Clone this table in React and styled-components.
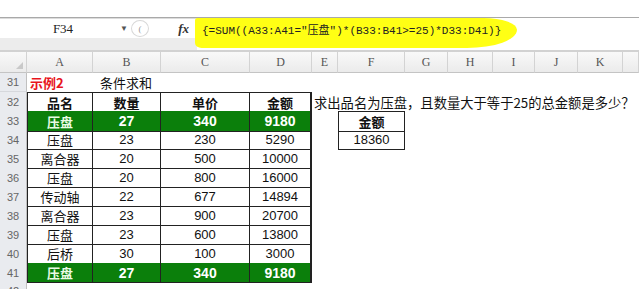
import React from "react";
import styled, { createGlobalStyle } from "styled-components";

const Global = createGlobalStyle`
  html, body { margin: 0; padding: 0; background: #fff; overflow: hidden; }
`;

const COLS = "27px 66px 68px 89px 62px 26px 67px 43px 45px 42px 43px 45px 1fr";
const CJK = `"Noto Sans CJK SC", "Liberation Sans", sans-serif`;
const NUM = `"Liberation Sans", "Noto Sans CJK SC", sans-serif`;

const Page = styled.div`
  width: 639px;
  height: 289px;
  overflow: hidden;
  background: #fff;
`;

const TopGap = styled.div`
  height: 17px;
  background: #fff;
`;

const FormulaBar = styled.div`
  display: flex;
  height: 35px;
  box-sizing: border-box;
  border-top: 1px solid #a9a9a9;
  box-shadow: inset 0 1px 0 #dcdcdc;
  border-bottom: 2px solid #d2d2d2;
  background: #ececec;
`;

const Tools = styled.div`
  width: 197px;
  display: flex;
  flex-direction: column;
`;

const ToolStrip = styled.div`
  height: 19px;
  margin-top: 1px;
  display: flex;
  align-items: center;
  background: #fff;
`;

const NameBox = styled.div`
  width: 130px;
  height: 100%;
  display: flex;
  align-items: center;
  font-family: "Liberation Serif", serif;
  font-size: 13px;
  color: #222;
  span { flex: 1; text-align: center; padding-left: 6px; }
  i {
    font-style: normal;
    font-size: 8px;
    color: #555;
    width: 10px;
  }
`;

const Handle = styled.div`
  width: 16px;
  height: 15px;
  border: 1px solid #d8d8d8;
  border-radius: 50%;
  margin-left: 1px;
  font-family: "Liberation Serif", serif;
  font-size: 9px;
  color: #999;
  display: flex;
  align-items: center;
  justify-content: center;
`;

const Fx = styled.div`
  margin-left: auto;
  margin-right: 8px;
  font-family: "Liberation Serif", serif;
  font-style: italic;
  font-weight: bold;
  font-size: 13px;
  color: #333;
`;

const FormulaInput = styled.div`
  flex: 1;
  position: relative;
  background: #fff;
`;

const Highlight = styled.div`
  position: absolute;
  left: -2px;
  top: 0;
  width: 322px;
  height: 30px;
  background: #ffff14;
  border-radius: 3px 40px 60px 8px / 3px 14px 22px 6px;
`;

const FormulaText = styled.div`
  position: relative;
  padding: 4px 0 0 5px;
  line-height: 19px;
  font-family: "Liberation Mono", "Noto Sans CJK SC", monospace;
  font-size: 11px;
  color: #222;
  white-space: nowrap;
`;

const Row = styled.div`
  display: grid;
  grid-template-columns: ${COLS};
  height: ${(p) => (p.$head ? 21 : 19)}px;
`;

const ColHead = styled.div`
  box-sizing: border-box;
  background: linear-gradient(#f9f9f9, #ebebeb);
  border-right: 1px solid #d3d3d3;
  border-bottom: 1px solid #c4c4c4;
  display: flex;
  align-items: center;
  justify-content: center;
  font-family: "Liberation Serif", serif;
  font-size: 12px;
  color: #555;
`;

const Corner = styled(ColHead)`
  position: relative;
  &::after {
    content: "";
    position: absolute;
    right: 3px;
    bottom: 3px;
    border-left: 7px solid transparent;
    border-bottom: 7px solid #c9c9c9;
  }
`;

const RowHead = styled.div`
  box-sizing: border-box;
  background: #e9ebef;
  border-right: 1px solid #c0c0c0;
  border-bottom: 1px solid #d6d8dc;
  display: flex;
  align-items: center;
  justify-content: center;
  font-family: "Liberation Sans", sans-serif;
  font-size: 11px;
  color: #666;
`;

const Cell = styled.div`
  box-sizing: border-box;
  display: flex;
  align-items: center;
  justify-content: ${(p) => (p.$align === "left" ? "flex-start" : "center")};
  padding-left: ${(p) => p.$pad || 0}px;
  white-space: nowrap;
  font-family: ${(p) => (p.$num ? NUM : CJK)};
  font-size: ${(p) => (p.$num && p.$bold ? 14 : 13)}px;
  font-weight: ${(p) => (p.$bold ? 700 : 400)};
  color: ${(p) => p.$color || "#111"};
  background: ${(p) => (p.$green ? "#0b7f0b" : "transparent")};
  border-right: ${(p) => (p.$boxed ? (p.$thick ? "2px solid #222" : "1px solid #222") : "none")};
  border-bottom: ${(p) => (p.$boxed ? "1px solid #222" : "none")};
  border-top: ${(p) => (p.$top ? "1px solid #222" : "none")};
  border-left: ${(p) => (p.$first ? "1px solid #222" : "none")};
`;

const Question = styled.span`
  font-family: ${CJK};
  font-size: 13.3px;
  color: #111;
  margin-left: 2px;
`;

const letters = ["A", "B", "C", "D", "E", "F", "G", "H", "I", "J", "K", ""];

const data = [
  ["压盘", 27, 340, 9180, true],
  ["压盘", 23, 230, 5290],
  ["离合器", 20, 500, 10000],
  ["压盘", 20, 800, 16000],
  ["传动轴", 22, 677, 14894],
  ["离合器", 23, 900, 20700],
  ["压盘", 23, 600, 13800],
  ["后桥", 30, 100, 3000],
  ["压盘", 27, 340, 9180, true],
];

const Blank = ({ n }) =>
  Array.from({ length: n }, (_, i) => <Cell key={"b" + i} />);

const App = () => {
  return (
    <Page>
      <Global />
      <TopGap />
      <FormulaBar>
        <Tools>
          <ToolStrip>
            <NameBox>
              <span>F34</span>
              <i>▼</i>
            </NameBox>
            <Handle>(</Handle>
            <Fx>fx</Fx>
          </ToolStrip>
        </Tools>
        <FormulaInput>
          <Highlight />
          <FormulaText>{'{=SUM((A33:A41="压盘")*(B33:B41>=25)*D33:D41)}'}</FormulaText>
        </FormulaInput>
      </FormulaBar>

      <Row $head>
        <Corner />
        {letters.map((l, i) => (
          <ColHead key={i}>{l}</ColHead>
        ))}
      </Row>

      <Row>
        <RowHead>31</RowHead>
        <Cell $align="left" $pad={3} $bold $color="#e8141c">示例2</Cell>
        <Cell $align="left" $pad={7}>条件求和</Cell>
        <Blank n={10} />
      </Row>

      <Row>
        <RowHead>32</RowHead>
        {["品名", "数量", "单价", "金额"].map((h, i) => (
          <Cell key={h} $boxed $top $first={i === 0} $thick={i === 3} $bold>
            {h}
          </Cell>
        ))}
        <Cell $align="left">
          <Question>求出品名为压盘，且数量大于等于25的总金额是多少？</Question>
        </Cell>
        <Blank n={7} />
      </Row>

      {data.map(([name, qty, price, amount, hl], r) => (
        <Row key={r}>
          <RowHead>{33 + r}</RowHead>
          <Cell $boxed $first $green={hl} $bold={hl} $color={hl ? "#e9fbe4" : undefined}>
            {name}
          </Cell>
          {[qty, price].map((v, i) => (
            <Cell key={i} $boxed $num $green={hl} $bold={hl} $color={hl ? "#fff" : undefined}>
              {v}
            </Cell>
          ))}
          <Cell $boxed $thick $num $green={hl} $bold={hl} $color={hl ? "#fff" : undefined}>
            {amount}
          </Cell>
          <Cell />
          {r === 0 && (
            <Cell $boxed $top $first $bold>
              金额
            </Cell>
          )}
          {r === 1 && (
            <Cell $boxed $first $num>
              18360
            </Cell>
          )}
          {r > 1 && <Cell />}
          <Blank n={6} />
        </Row>
      ))}

      <Row>
        <RowHead>42</RowHead>
        <Blank n={12} />
      </Row>
    </Page>
  );
};

export default App;
